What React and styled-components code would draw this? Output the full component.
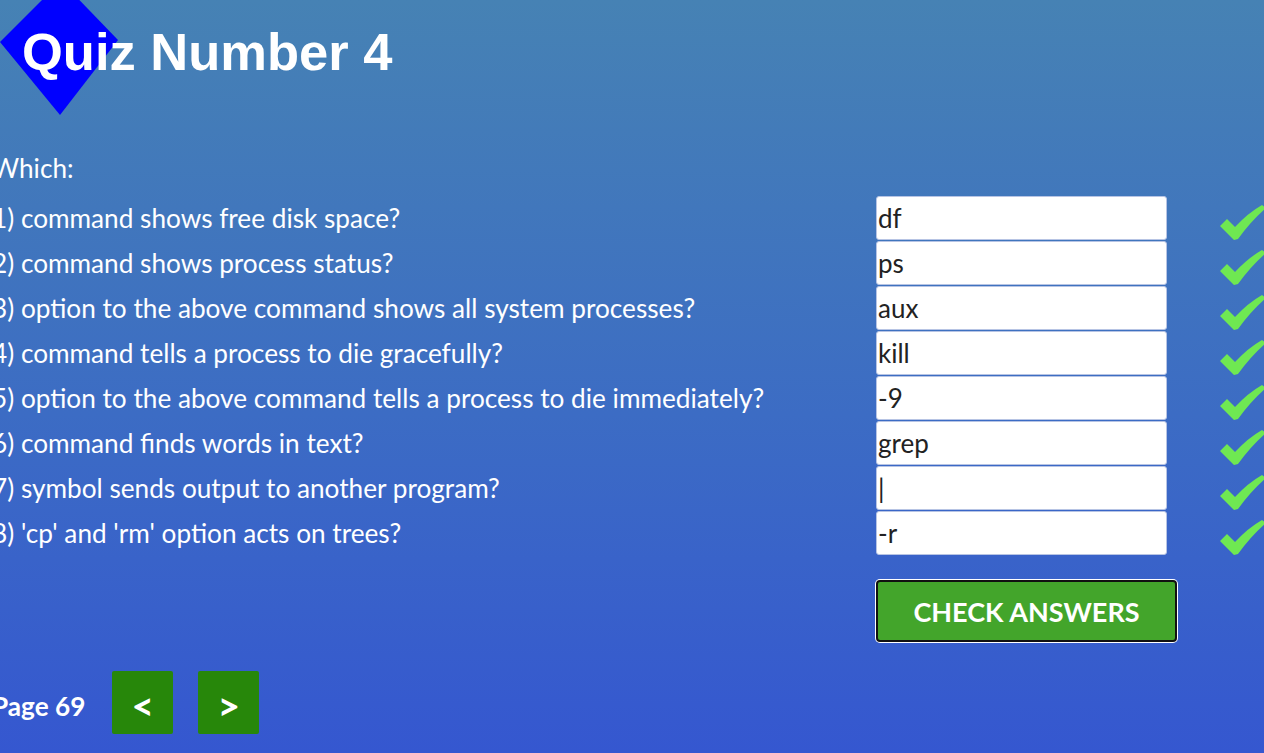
import React from 'react'
import styled, { createGlobalStyle } from 'styled-components'

const GlobalStyle = createGlobalStyle`
  html, body {
    margin: 0;
    padding: 0;
    height: 100%;
  }
  body {
    background: linear-gradient(to bottom, #4682b4 0%, #3c6cc4 55%, #3557d0 100%);
    font-family: 'Lato', 'Open Sans', sans-serif;
    color: #fff;
    overflow: hidden;
  }
`;

const Page = styled.div`
  width: 1272px;
  height: 753px;
  margin-left: -8px;
`;

const Header = styled.header`
  position: relative;
  height: 140px;
`;

const Diamond = styled.svg`
  position: absolute;
  left: 8px;
  top: 0;
`;

const Title = styled.h1`
  position: relative;
  margin: 0;
  padding: 23px 0 0 30px;
  font-family: 'Liberation Sans', Arial, sans-serif;
  font-weight: bold;
  font-size: 52.5px;
  line-height: 58px;
  color: #fff;
`;

const Intro = styled.div`
  height: 56px;
  font-size: 26.2px;
  line-height: 57px;
`;

const Row = styled.div`
  display: flex;
  align-items: center;
  height: 44px;
  margin-bottom: 1px;
`;

const Question = styled.div`
  flex: 0 0 884px;
  font-size: 26.2px;
  line-height: 46px;
  white-space: nowrap;
`;

const Answer = styled.input`
  box-sizing: border-box;
  width: 291px;
  height: 44px;
  margin: 0;
  padding: 0 1px;
  border: 1px solid #b7c4e4;
  border-radius: 3px;
  background: #fff;
  font-family: 'Lato', sans-serif;
  font-size: 26px;
  color: #222;
  outline: none;
`;

const Check = styled.svg`
  margin-left: 53px;
  margin-top: 10px;
  flex: 0 0 auto;
`;

const Actions = styled.div`
  padding: 24px 0 0 884px;
`;

const CheckButton = styled.button`
  box-sizing: border-box;
  width: 301px;
  height: 62px;
  border: 2px solid #111;
  border-radius: 4px;
  box-shadow: 0 0 0 1px #fff;
  background: #43a52b;
  color: #fff;
  font-family: 'Lato', sans-serif;
  font-weight: bold;
  font-size: 27px;
  cursor: pointer;
`;

const Nav = styled.nav`
  display: flex;
  align-items: center;
  margin-top: 29px;
  gap: 25px;
`;

const PageLabel = styled.span`
  font-weight: bold;
  font-size: 26.2px;
  padding-top: 6px;
  margin-right: 2px;
`;

const NavButton = styled.button`
  width: 61px;
  height: 63px;
  padding: 4px 0 0;
  border: none;
  border-radius: 2px;
  background: #27870a;
  color: #fff;
  font-family: 'Lato', sans-serif;
  font-weight: bold;
  font-size: 39px;
  line-height: 56px;
  cursor: pointer;
`;

const questions = [
  ['1) command shows free disk space?', 'df'],
  ['2) command shows process status?', 'ps'],
  ['3) option to the above command shows all system processes?', 'aux'],
  ['4) command tells a process to die gracefully?', 'kill'],
  ['5) option to the above command tells a process to die immediately?', '-9'],
  ['6) command finds words in text?', 'grep'],
  ['7) symbol sends output to another program?', '|'],
  ["8) 'cp' and 'rm' option acts on trees?", '-r'],
];

function Tick() {
  return (
    <Check width="46" height="36" viewBox="0 0 46 36">
      <path
        d="M0 21 L7 14 L15 22 Q28 8 42 0 L46 3 Q31 16 18 34 L14 35 Z"
        fill="#6fe852"
      />
    </Check>
  );
}

export default function App() {
  return (
    <>
      <GlobalStyle />
      <Page>
        <Header>
          <Diamond width="120" height="116" viewBox="0 0 120 116">
            <polygon points="61,-19 118,40 60,115 0,42" fill="#0000ff" />
          </Diamond>
          <Title>Quiz Number 4</Title>
        </Header>
        <Intro>Which:</Intro>
        {questions.map(([q, a]) => (
          <Row key={q}>
            <Question>{q}</Question>
            <Answer defaultValue={a} />
            <Tick />
          </Row>
        ))}
        <Actions>
          <CheckButton>CHECK ANSWERS</CheckButton>
        </Actions>
        <Nav>
          <PageLabel>Page 69</PageLabel>
          <NavButton>&lt;</NavButton>
          <NavButton>&gt;</NavButton>
        </Nav>
      </Page>
    </>
  );
}
